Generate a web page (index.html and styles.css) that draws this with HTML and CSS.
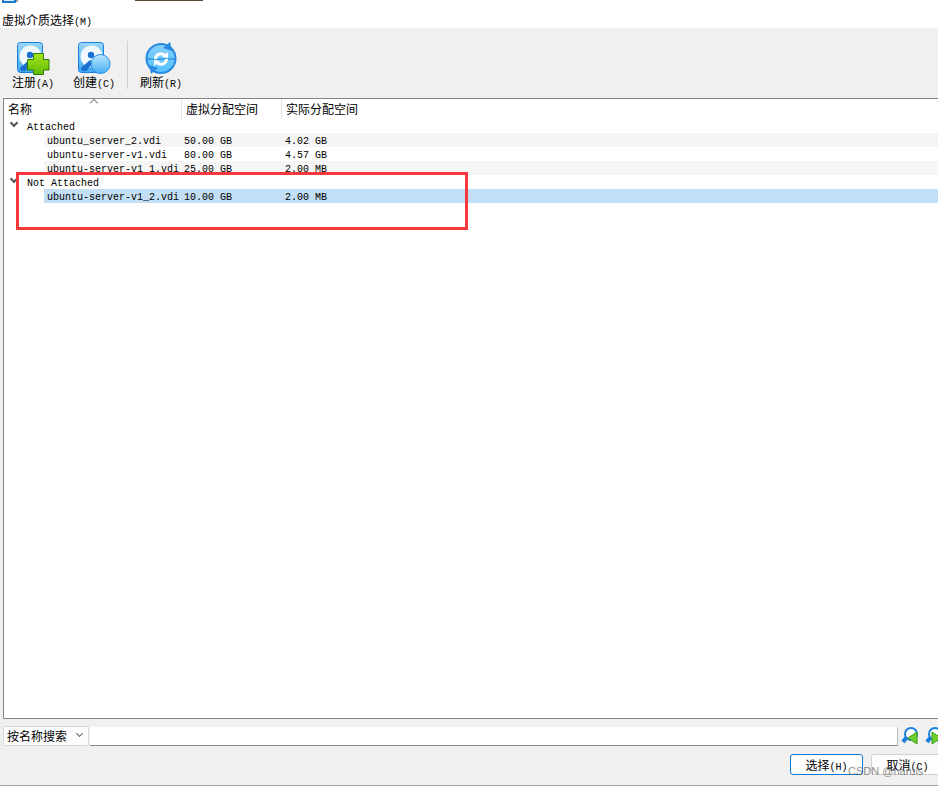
FILE: index.html

```html
<!DOCTYPE html>
<html lang="zh-CN">
<head>
  <meta charset="UTF-8" />
  <title>虚拟介质选择</title>
  <link rel="stylesheet" href="styles.css">
</head>
<body>
  <div class="titlebar">
    <svg class="title-icon" width="20" height="3" viewBox="0 0 20 3"><rect x="3" y="-4" width="12" height="6" fill="#d8ecfb" stroke="#1e78cc" stroke-width="2"/><rect x="16" y="0" width="2" height="2" fill="#999"/></svg>
    <div class="title-blur"></div>
  </div>
  <div class="menubar">虚拟介质选择<span class="hot">(M)</span></div>

  <div class="toolbar">
    <div class="tool">
      <svg width="33" height="33" viewBox="0 0 33 33">
        <defs>
          <linearGradient id="hdBg" x1="0" y1="0" x2="0" y2="1"><stop offset="0" stop-color="#9ad6fb"/><stop offset="1" stop-color="#3fa6f0"/></linearGradient>
          <linearGradient id="plusBg" x1="0" y1="0" x2="0" y2="1"><stop offset="0" stop-color="#a8e61e"/><stop offset="1" stop-color="#5fbb05"/></linearGradient>
        </defs>
        <rect x="0.5" y="0.5" width="25" height="30" rx="3" fill="url(#hdBg)" stroke="#1a7fd8"/>
        <circle cx="13.5" cy="14.5" r="11" fill="#f2f9fe"/>
        <circle cx="13" cy="13" r="3.2" fill="#1a6fd0"/>
        <path d="M3 26l9-8 3 3-7 8H4z" fill="#1a6fd0"/>
        <path d="M16.5 11.5h10v6h5.500v10.500h-5.500v4.500h-10v-4.500h-6v-10.500h6z" fill="url(#plusBg)" stroke="#2f7d06"/>
      </svg>
      <span>注册<span class="hot">(A)</span></span>
    </div>
    <div class="tool">
      <svg width="33" height="33" viewBox="0 0 33 33">
        <defs>
          <linearGradient id="ballBg" x1="0" y1="0" x2="0" y2="1"><stop offset="0" stop-color="#b9e7fd"/><stop offset="1" stop-color="#46aef4"/></linearGradient>
        </defs>
        <rect x="0.5" y="0.5" width="25" height="30" rx="3" fill="url(#hdBg)" stroke="#1a7fd8"/>
        <circle cx="13.5" cy="14.5" r="11" fill="#f2f9fe"/>
        <circle cx="13" cy="13" r="3.2" fill="#1a6fd0"/>
        <path d="M3 26l9-8 3 3-7 8H4z" fill="#1a6fd0"/>
        <circle cx="22.500" cy="22" r="9.500" fill="url(#ballBg)" stroke="#2a8ae0"/>
      </svg>
      <span>创建<span class="hot">(C)</span></span>
    </div>
    <div class="tool-sep"></div>
    <div class="tool">
      <svg width="33" height="33" viewBox="0 0 33 33">
        <defs>
          <linearGradient id="syncBg" x1="0" y1="0" x2="0" y2="1"><stop offset="0" stop-color="#86cff8"/><stop offset="1" stop-color="#52c3ff"/></linearGradient>
        </defs>
        <circle cx="16" cy="16.500" r="14.500" fill="url(#syncBg)" stroke="#2a8ae0" stroke-width="2"/>
        <path d="M25 0l2 9-9-3z" fill="#2a8ae0"/>
        <path d="M6 32l-2-9 9 3z" fill="#2a8ae0"/>
        <path d="M1 17h30" stroke="#1a7fd8"/>
        <path d="M10.500 17a5.500 5.500 0 0 1 9-4" fill="none" stroke="#fff" stroke-width="3"/>
        <path d="M21.500 17a5.500 5.500 0 0 1-9 4" fill="none" stroke="#fff" stroke-width="3"/>
        <path d="M17 15l6-5v6z" fill="#fff"/>
        <path d="M15 19l-6 5v-6z" fill="#fff"/>
      </svg>
      <span>刷新<span class="hot">(R)</span></span>
    </div>
  </div>

  <div class="media-panel">
    <div class="sort-mark"></div>
    <div class="head-row">
      <div class="col-name">名称</div>
      <div class="col-size">虚拟分配空间</div>
      <div class="col-real">实际分配空间</div>
    </div>

    <div class="group-row"><span class="chev"></span>Attached</div>
    <div class="row alt"><div class="col-name">ubuntu_server_2.vdi</div><div class="col-size">50.00 GB</div><div class="col-real">4.02 GB</div></div>
    <div class="row"><div class="col-name">ubuntu-server-v1.vdi</div><div class="col-size">80.00 GB</div><div class="col-real">4.57 GB</div></div>
    <div class="row alt"><div class="col-name">ubuntu-server-v1_1.vdi</div><div class="col-size">25.00 GB</div><div class="col-real">2.00 MB</div></div>
    <div class="group-row"><span class="chev"></span>Not Attached</div>
    <div class="row selected"><div class="col-name">ubuntu-server-v1_2.vdi</div><div class="col-size">10.00 GB</div><div class="col-real">2.00 MB</div></div>

    <div class="highlight-box"></div>
  </div>

  <div class="search-bar">
    <div class="search-select">按名称搜索<span class="select-arrow"></span></div>
    <div class="search-input"></div>
    <svg class="nav-icon" width="17" height="18" viewBox="0 0 17 18">
      <circle cx="10" cy="7" r="6" fill="#fff" stroke="#1a7fd8" stroke-width="2"/>
      <path d="M5 11l-3 4" stroke="#1a7fd8" stroke-width="4"/>
      <path d="M16 5v12l-9-6z" fill="#6fcf2e" stroke="#3a9a18"/>
    </svg>
    <svg class="nav-icon" width="17" height="18" viewBox="0 0 17 18">
      <circle cx="10" cy="7" r="6" fill="#fff" stroke="#1a7fd8" stroke-width="2"/>
      <path d="M5 11l-3 4" stroke="#1a7fd8" stroke-width="4"/>
      <path d="M7 5v12l9-6z" fill="#6fcf2e" stroke="#3a9a18"/>
    </svg>
  </div>

  <div class="button-bar">
    <button class="btn primary">选择<span class="hot">(H)</span></button>
    <button class="btn">取消<span class="hot">(C)</span></button>
  </div>
  <div class="watermark">CSDN @haruls</div>
  <div class="bottom-line"></div>
</body>
</html>
```

FILE: styles.css

```css
html, body { margin: 0; padding: 0; }
body {
  width: 938px; height: 786px; overflow: hidden; position: relative;
  background: #f0f0f0; color: #000;
  font-family: "Noto Sans CJK SC", "Liberation Mono", monospace; font-size: 12px;
}
.hot { font-family: "Liberation Mono", monospace; font-size: 10px; }
.titlebar { height: 8px; background: #fff; display: flex; overflow: hidden; }
.title-icon { flex: none; }
.title-blur { width: 68px; height: 1px; margin-left: 115px; background: #5a4a30; }
.menubar { height: 20px; line-height: 24px; background: #fff; padding-left: 2px; }
.toolbar { height: 70px; display: flex; align-items: flex-start; padding: 14px 0 0 5px; box-sizing: border-box; }
.tool { width: 56px; margin-right: 5px; display: flex; flex-direction: column; align-items: center; }
.tool svg { display: block; }
.tool > span { line-height: 14px; white-space: nowrap; }
.tool-sep { width: 1px; height: 48px; margin: -1px 5px 0 0; background: #d0d0d0; }
.media-panel {
  height: 621px; margin: 0 0 0 3px; box-sizing: border-box;
  background: #fff; border: 1px solid #868686; border-right: 0; position: relative;
}
.sort-mark {
  position: absolute; left: 87px; top: 1px; width: 5px; height: 5px;
  border-left: 1px solid #888; border-top: 1px solid #888; transform: rotate(45deg);
}
.head-row { display: flex; height: 20px; line-height: 20px; }
.head-row .col-name { width: 177px; padding-left: 4px; }
.head-row .col-size, .head-row .col-real { border-left: 1px solid #e5e5e5; padding-left: 4px; }
.col-name { width: 178px; box-sizing: border-box; flex: none; white-space: nowrap; }
.col-size { width: 100px; box-sizing: border-box; flex: none; }
.col-real { flex: 1; }
.group-row { height: 14px; line-height: 17px; font-family: "Liberation Mono", monospace; font-size: 10px; padding-left: 23px; position: relative; }
.chev {
  position: absolute; left: 7px; top: 1px; width: 4px; height: 4px;
  border-right: 2px solid #555; border-bottom: 2px solid #555; transform: rotate(45deg);
}
.row { display: flex; height: 14px; line-height: 17px; font-family: "Liberation Mono", monospace; font-size: 10px; margin-left: 40px; }
.row .col-name { width: 138px; padding-left: 3px; }
.row .col-size { padding-left: 2px; }
.row .col-real { padding-left: 3px; }
.row.alt { background: #f5f5f5; }
.row.selected { background: #c3dff5; }
.highlight-box {
  position: absolute; left: 12px; top: 73px; width: 446px; height: 52px;
  border: 3px solid #f5383c; pointer-events: none;
}
.search-bar { height: 35px; display: flex; align-items: flex-start; padding: 7px 0 0 3px; box-sizing: border-box; }
.search-select {
  width: 81px; height: 18px; line-height: 18px; padding-left: 3px; background: #fdfdfd;
  border: 1px solid #d9d9d9; border-radius: 2px; position: relative; flex: none;
}
.select-arrow {
  position: absolute; right: 6px; top: 4px; width: 4px; height: 4px;
  border-right: 1px solid #666; border-bottom: 1px solid #666; transform: rotate(45deg);
}
.search-input {
  width: 807px; height: 18px; margin: 1px 0 0 1px; flex: none;
  background: #fff; border-bottom: 1px solid #868686; border-right: 1px solid #bbb;
}
.nav-icon { flex: none; margin: 1px 0 0 3px; }
.nav-icon + .nav-icon { margin-left: 7px; }
.button-bar { height: 30px; display: flex; padding-left: 790px; gap: 8px; }
.btn {
  width: 73px; height: 21px; background: #fdfdfd; border: 1px solid #d0d0d0; border-radius: 3px;
  font: inherit; padding: 0; color: #000; flex: none;
}
.btn.primary { border-color: #0a78d7; }
.watermark {
  position: absolute; left: 848px; top: 765px; font-family: "Liberation Sans", sans-serif; font-size: 11px; color: rgba(90,90,90,.7);
}
.bottom-line { position: absolute; left: 0; right: 0; top: 785px; height: 1px; background: #a0a0a0; }
```
